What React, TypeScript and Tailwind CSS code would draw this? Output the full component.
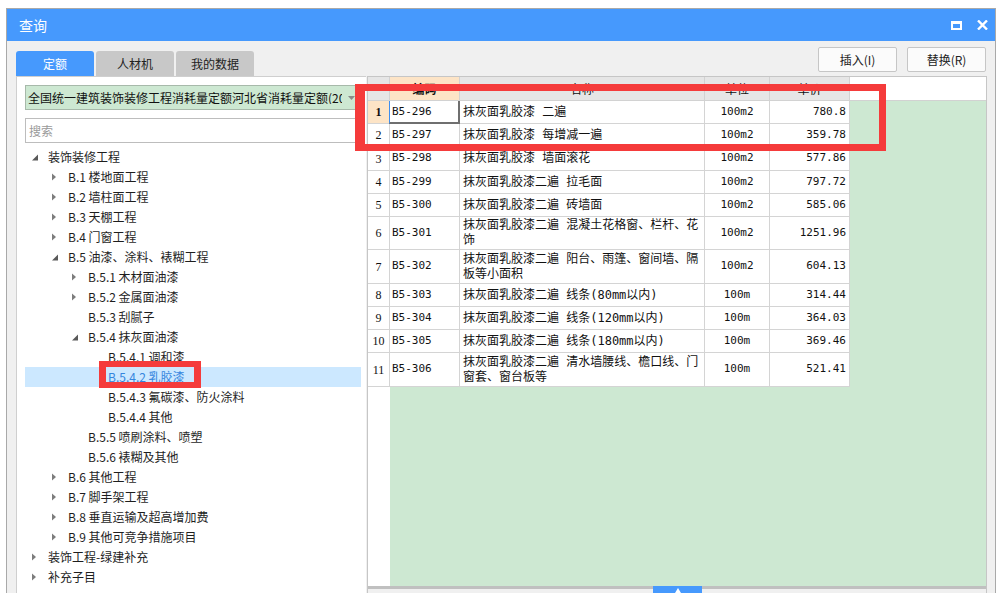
import React from "react"

type Node = { label: string; level: number; arrow: "open" | "closed" | "none"; selected?: boolean }

const tree: Node[] = [
  { label: "装饰装修工程", level: 0, arrow: "open" },
  { label: "B.1 楼地面工程", level: 1, arrow: "closed" },
  { label: "B.2 墙柱面工程", level: 1, arrow: "closed" },
  { label: "B.3 天棚工程", level: 1, arrow: "closed" },
  { label: "B.4 门窗工程", level: 1, arrow: "closed" },
  { label: "B.5 油漆、涂料、裱糊工程", level: 1, arrow: "open" },
  { label: "B.5.1 木材面油漆", level: 2, arrow: "closed" },
  { label: "B.5.2 金属面油漆", level: 2, arrow: "closed" },
  { label: "B.5.3 刮腻子", level: 2, arrow: "none" },
  { label: "B.5.4 抹灰面油漆", level: 2, arrow: "open" },
  { label: "B.5.4.1 调和漆", level: 3, arrow: "none" },
  { label: "B.5.4.2 乳胶漆", level: 3, arrow: "none", selected: true },
  { label: "B.5.4.3 氟碳漆、防火涂料", level: 3, arrow: "none" },
  { label: "B.5.4.4 其他", level: 3, arrow: "none" },
  { label: "B.5.5 喷刷涂料、喷塑", level: 2, arrow: "none" },
  { label: "B.5.6 裱糊及其他", level: 2, arrow: "none" },
  { label: "B.6 其他工程", level: 1, arrow: "closed" },
  { label: "B.7 脚手架工程", level: 1, arrow: "closed" },
  { label: "B.8 垂直运输及超高增加费", level: 1, arrow: "closed" },
  { label: "B.9 其他可竞争措施项目", level: 1, arrow: "closed" },
  { label: "装饰工程-绿建补充", level: 0, arrow: "closed" },
  { label: "补充子目", level: 0, arrow: "closed" },
]

const padByLevel = ["pl-[4px]", "pl-[24px]", "pl-[44px]", "pl-[64px]"]

const rows = [
  { n: 1, code: "B5-296", name: "抹灰面乳胶漆 二遍", unit: "100m2", price: "780.8", h: "h-[23px]" },
  { n: 2, code: "B5-297", name: "抹灰面乳胶漆 每增减一遍", unit: "100m2", price: "359.78", h: "h-[23px]" },
  { n: 3, code: "B5-298", name: "抹灰面乳胶漆 墙面滚花", unit: "100m2", price: "577.86", h: "h-[24px]" },
  { n: 4, code: "B5-299", name: "抹灰面乳胶漆二遍 拉毛面", unit: "100m2", price: "797.72", h: "h-[23px]" },
  { n: 5, code: "B5-300", name: "抹灰面乳胶漆二遍 砖墙面", unit: "100m2", price: "585.06", h: "h-[23px]" },
  { n: 6, code: "B5-301", name: "抹灰面乳胶漆二遍 混凝土花格窗、栏杆、花饰", unit: "100m2", price: "1251.96", h: "h-[33px]" },
  { n: 7, code: "B5-302", name: "抹灰面乳胶漆二遍 阳台、雨篷、窗间墙、隔板等小面积", unit: "100m2", price: "604.13", h: "h-[34px]" },
  { n: 8, code: "B5-303", name: "抹灰面乳胶漆二遍 线条(80mm以内)", unit: "100m", price: "314.44", h: "h-[23px]" },
  { n: 9, code: "B5-304", name: "抹灰面乳胶漆二遍 线条(120mm以内)", unit: "100m", price: "364.03", h: "h-[23px]" },
  { n: 10, code: "B5-305", name: "抹灰面乳胶漆二遍 线条(180mm以内)", unit: "100m", price: "369.46", h: "h-[23px]" },
  { n: 11, code: "B5-306", name: "抹灰面乳胶漆二遍 清水墙腰线、檐口线、门窗套、窗台板等", unit: "100m", price: "521.41", h: "h-[34px]" },
]

function TreeArrow({ state }: { state: Node["arrow"] }) {
  if (state === "closed")
    return (
      <svg width="10" height="10" viewBox="0 0 10 10">
        <path d="M3 1.5 L7 5 L3 8.5 Z" fill="#7d7d7d" />
      </svg>
    )
  if (state === "open")
    return (
      <svg width="10" height="10" viewBox="0 0 10 10">
        <path d="M9 2.5 L9 8.5 L3 8.5 Z" fill="#595959" />
      </svg>
    )
  return null
}

export default function App() {
  return (
    <div className="relative w-[1000px] h-[593px] overflow-hidden bg-white pl-[6px] pt-[8px] font-['Noto_Sans_CJK_SC',sans-serif]">
      <div className="w-[990px] h-[585px] border border-b-0 border-[#a9a9a9] bg-[#f0f0f0] flex flex-col">
        {/* title bar */}
        <div className="h-[32px] shrink-0 bg-[#4699fd] flex items-center justify-between pl-[12px] pr-[7px]">
          <span className="text-white text-[14px] leading-none">查询</span>
          <div className="flex items-center gap-[15px]">
            <svg width="11" height="9" viewBox="0 0 11 9">
              <rect x="1" y="1.5" width="9" height="6.5" fill="none" stroke="#fff" strokeWidth="2" />
              <rect x="0" y="0" width="11" height="3" fill="#fff" />
            </svg>
            <svg width="11" height="10" viewBox="0 0 11 10">
              <path d="M1 0.5 L10 9.5 M10 0.5 L1 9.5" stroke="#fff" strokeWidth="2.4" />
            </svg>
          </div>
        </div>

        <div className="flex-1 min-h-0 flex flex-col pl-[9px] pr-[8px]">
          {/* tabs + buttons */}
          <div className="h-[35px] shrink-0 flex justify-between items-start">
            <div className="mt-[10px] flex gap-[2px]">
              <div className="w-[78px] h-[25px] rounded-t-[3px] bg-[#4699fd] text-white text-[12px] flex items-center justify-center">定额</div>
              <div className="w-[78px] h-[25px] rounded-t-[3px] bg-[#c8c8c8] text-[#222] text-[12px] flex items-center justify-center">人材机</div>
              <div className="w-[78px] h-[25px] rounded-t-[3px] bg-[#c8c8c8] text-[#222] text-[12px] flex items-center justify-center">我的数据</div>
            </div>
            <div className="mt-[6px] mr-[1px] flex gap-[10px]">
              <button className="w-[79px] h-[25px] rounded-[2px] border border-[#c6c6c6] bg-[#fbfbfb] text-[12px] text-[#222]">插入(I)</button>
              <button className="w-[79px] h-[25px] rounded-[2px] border border-[#c6c6c6] bg-[#fbfbfb] text-[12px] text-[#222]">替换(R)</button>
            </div>
          </div>

          <div className="flex-1 min-h-0 flex gap-[1px]">
            {/* left panel */}
            <div className="w-[350px] shrink-0 bg-white border-l border-t border-[#cfcfcf] pl-[8px] pr-[5px] pt-[8px] flex flex-col">
              <div className="h-[25px] shrink-0 border border-[#a7b9aa] bg-[#cde8d2] flex items-center">
                <div className="w-[316px] overflow-hidden whitespace-nowrap pl-[2px] text-[12px] text-[#111] leading-none">
                  全国统一建筑装饰装修工程消耗量定额河北省消耗量定额(2012)
                </div>
                <div className="flex-1 flex justify-center">
                  <svg width="7" height="4" viewBox="0 0 7 4">
                    <path d="M0 0 L7 0 L3.5 4 Z" fill="#8a8a8a" />
                  </svg>
                </div>
              </div>
              <div className="mt-[8px] h-[25px] shrink-0 border border-[#bdbdbd] bg-white flex items-center pl-[3px] text-[12px] text-[#9a9a9a] leading-none">
                搜索
              </div>
              <div className="mt-[4px] flex flex-col">
                {tree.map((t) => (
                  <div
                    key={t.label}
                    className={`h-[20px] flex items-center ${padByLevel[t.level]} ${t.selected ? "bg-[#cce8ff]" : ""}`}
                  >
                    <div className="w-[10px] h-[10px] mr-[9px] shrink-0 flex items-center justify-center">
                      <TreeArrow state={t.arrow} />
                    </div>
                    <span className={`text-[12px] leading-none whitespace-nowrap ${t.selected ? "text-[#3586de]" : "text-[#1e1e1e]"}`}>
                      {t.label}
                    </span>
                  </div>
                ))}
              </div>
            </div>

            {/* grid */}
            <div className="flex-1 min-w-0 bg-white border-l border-t border-r border-[#c6c6c6] flex flex-col font-['DejaVu_Sans_Mono','Noto_Sans_CJK_SC',monospace] text-[12px] text-[#111]">
              <div className="h-[24px] shrink-0 flex border-b border-[#d2d2d2]">
                <div className="w-[22px] shrink-0 bg-[#e6e6e6] border-r border-[#d2d2d2]" />
                <div className="w-[70px] shrink-0 bg-[#fde4c6] border-r border-[#d2d2d2] flex items-center justify-center font-bold font-['Noto_Sans_CJK_SC',sans-serif]">编码</div>
                <div className="w-[245px] shrink-0 bg-[#e6e6e6] border-r border-[#d2d2d2] flex items-center justify-center font-['Noto_Sans_CJK_SC',sans-serif]">名称</div>
                <div className="w-[65px] shrink-0 bg-[#e6e6e6] border-r border-[#d2d2d2] flex items-center justify-center font-['Noto_Sans_CJK_SC',sans-serif]">单位</div>
                <div className="w-[80px] shrink-0 bg-[#e6e6e6] border-r border-[#d2d2d2] flex items-center justify-center font-['Noto_Sans_CJK_SC',sans-serif]">单价</div>
                <div className="flex-1 bg-white" />
              </div>

              {rows.map((r) => (
                <div key={r.n} className={`flex shrink-0 ${r.h}`}>
                  <div
                    className={`w-[22px] shrink-0 border-r border-b border-[#d4d4d4] flex items-center justify-center font-['Liberation_Serif',serif] text-[12px] ${
                      r.n === 1 ? "bg-[#fde4c6] font-bold" : "bg-white"
                    }`}
                  >
                    {r.n}
                  </div>
                  <div className="relative w-[70px] shrink-0 border-r border-b border-[#d4d4d4] flex items-center pl-[2px] text-[11px]">
                    {r.code}
                    {r.n === 1 && (
                      <div className="absolute -left-[1px] top-0 -right-[1px] -bottom-[1px] border-l-[1px] border-l-[#3d8ef0] border-r-2 border-b-2 border-r-[#6f6f6f] border-b-[#6f6f6f]" />
                    )}
                  </div>
                  <div className="w-[245px] shrink-0 border-r border-b border-[#d4d4d4] flex items-center pl-[3px] pr-[2px] leading-[15px]">
                    <span>{r.name}</span>
                  </div>
                  <div className="w-[65px] shrink-0 border-r border-b border-[#d4d4d4] flex items-center justify-center text-[11px]">
                    {r.unit}
                  </div>
                  <div className="w-[80px] shrink-0 border-r border-b border-[#d4d4d4] flex items-center justify-end pr-[3px] text-[11px]">
                    {r.price}
                  </div>
                  <div className="flex-1 bg-[#cde8d2]" />
                </div>
              ))}

              <div className="flex-1 min-h-0 flex">
                <div className="w-[22px] shrink-0 bg-white" />
                <div className="flex-1 bg-[#cde8d2]" />
              </div>

              <div className="relative h-[7px] shrink-0 bg-[#f0f0f0]">
                <div className="h-[3px] bg-[#c0c0c0]" />
                <div className="absolute left-[285px] top-0 w-[49px] h-[7px] bg-[#4699fd] flex justify-center pt-[2px]">
                  <svg width="6" height="5" viewBox="0 0 6 5">
                    <path d="M3 0 L6 5 L0 5 Z" fill="#fff" />
                  </svg>
                </div>
              </div>
            </div>
          </div>
        </div>
      </div>

      {/* annotation boxes */}
      <div className="absolute left-[355px] top-[84px] w-[531px] h-[67px] border-[7px] border-l-[10px] border-[#f53b3b]" />
      <div className="absolute left-[99px] top-[361px] w-[102px] h-[27px] border-[6px] border-l-[7px] border-r-[7px] border-[#f53b3b]" />
    </div>
  )
}
